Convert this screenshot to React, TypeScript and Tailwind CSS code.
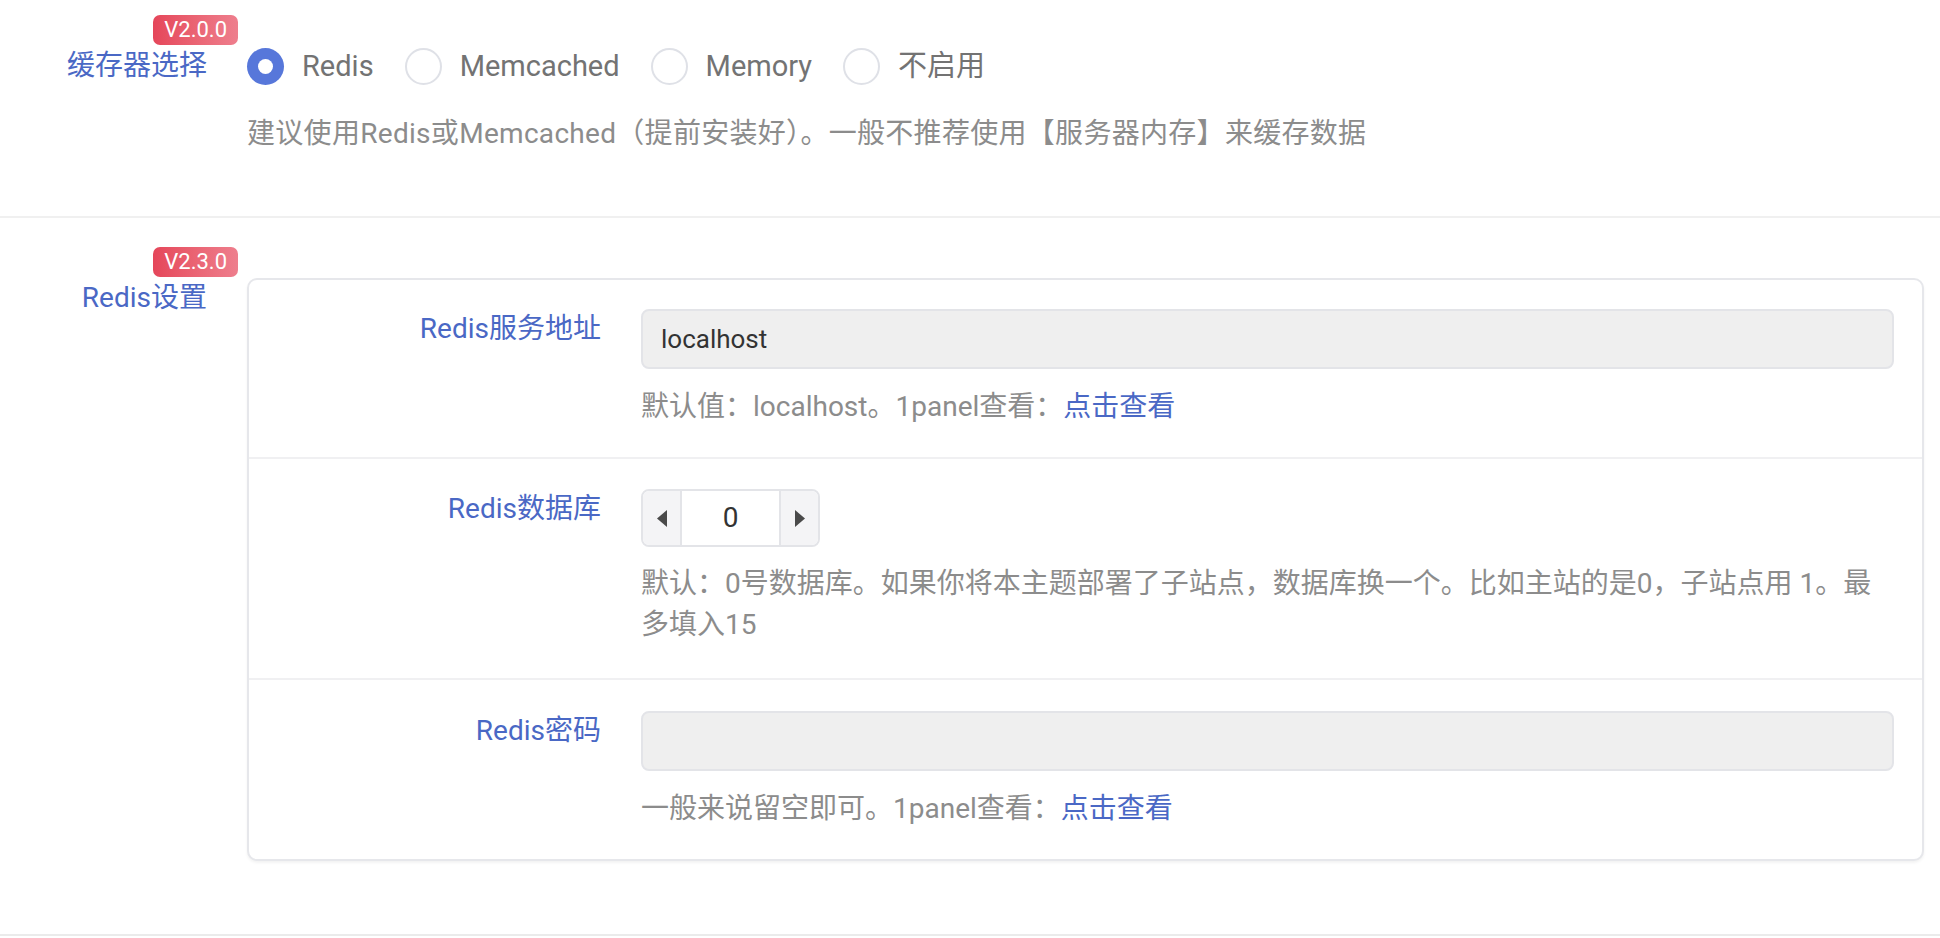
import { useState } from 'react';

const BLUE = 'text-[#4a68c5]';

function Badge({ children }: { children: React.ReactNode }) {
  return (
    <span className="absolute right-[-31px] top-[-31px] h-[30px] whitespace-nowrap rounded-[7px] bg-linear-to-r from-[#e5465a] to-[#ee7e8d] px-[11px] text-[22px] leading-[30px] text-white">
      {children}
    </span>
  );
}

function Radio({ label, checked, onClick }: { label: string; checked: boolean; onClick: () => void }) {
  return (
    <label className="flex cursor-pointer items-center gap-[18px]" onClick={onClick}>
      {checked ? (
        <span className="flex h-[37px] w-[37px] items-center justify-center rounded-full bg-[#5777da]">
          <span className="h-[15px] w-[15px] rounded-full bg-white" />
        </span>
      ) : (
        <span className="h-[37px] w-[37px] rounded-full border-2 border-[#dfe1e7] bg-white" />
      )}
      <span className="text-[29px] leading-[40px] text-[#737373]">{label}</span>
    </label>
  );
}

function Row({ label, top, children, last }: { label: string; top: string; children: React.ReactNode; last?: boolean }) {
  return (
    <div className={`flex items-start ${last ? '' : 'border-b-2 border-[#f0f0f2]'} ${top}`}>
      <div className={`w-[352px] shrink-0 text-right text-[28px] leading-[40px] ${BLUE}`}>{label}</div>
      <div className="ml-[40px] mr-[28px] flex-1">{children}</div>
    </div>
  );
}

export default function App() {
  const [cache, setCache] = useState('Redis');
  const [db, setDb] = useState(0);

  return (
    <div className="min-h-screen bg-white font-[Roboto,'Noto_Sans_CJK_SC',sans-serif]">
      {/* 缓存器选择 */}
      <div className="flex pt-[46px] pb-[61px]">
        <div className="w-[207px] shrink-0 text-right">
          <span className={`relative inline-block text-[28px] leading-[40px] ${BLUE}`}>
            缓存器选择
            <Badge>V2.0.0</Badge>
          </span>
        </div>
        <div className="ml-[40px]">
          <div className="flex h-[40px] items-center gap-[31px]">
            {['Redis', 'Memcached', 'Memory', '不启用'].map((c) => (
              <Radio key={c} label={c} checked={cache === c} onClick={() => setCache(c)} />
            ))}
          </div>
          <p className="mt-[27px] text-[28px] leading-[42px] tracking-[0.3px] text-[#8c8c8c]">
            建议使用Redis或Memcached（提前安装好）。一般不推荐使用【服务器内存】来缓存数据
          </p>
        </div>
      </div>

      <div className="h-[2px] bg-[#f0f0f0]" />

      {/* Redis设置 */}
      <div className="flex items-start pt-[60px] pb-[73px]">
        <div className="w-[207px] shrink-0 text-right">
          <span className={`relative inline-block text-[28px] leading-[40px] ${BLUE}`}>
            Redis设置
            <Badge>V2.3.0</Badge>
          </span>
        </div>
        <div className="ml-[40px] mr-[16px] flex-1 rounded-[10px] border-2 border-[#e6e7eb] bg-white shadow-[0_2px_3px_rgba(0,0,0,0.05)]">
          <Row label="Redis服务地址" top="pt-[29px] pb-[30px]">
            <input
              defaultValue="localhost"
              className="h-[60px] w-full rounded-[8px] border-2 border-[#e3e4e8] bg-[#efefef] px-[18px] text-[26px] text-[#333] outline-none"
            />
            <p className="mt-[17px] text-[28px] leading-[41px] text-[#8c8c8c]">
              默认值：localhost。1panel查看：<a className={BLUE}>点击查看</a>
            </p>
          </Row>
          <Row label="Redis数据库" top="pt-[30px] pb-[33px]">
            <div className="flex h-[58px] w-[179px] overflow-hidden rounded-[8px] border-2 border-[#e3e4e8]">
              <button
                className="flex w-[39px] items-center justify-center border-r-2 border-[#e3e4e8] bg-[#f4f4f6]"
                onClick={() => setDb(Math.max(0, db - 1))}
              >
                <svg width="10" height="17" viewBox="0 0 10 17">
                  <polygon points="10,0 10,17 0,8.5" fill="#4a4a4a" />
                </svg>
              </button>
              <div className="flex flex-1 items-center justify-center bg-white text-[28px] text-[#333]">{db}</div>
              <button
                className="flex w-[39px] items-center justify-center border-l-2 border-[#e3e4e8] bg-[#f4f4f6]"
                onClick={() => setDb(Math.min(15, db + 1))}
              >
                <svg width="10" height="17" viewBox="0 0 10 17">
                  <polygon points="0,0 0,17 10,8.5" fill="#4a4a4a" />
                </svg>
              </button>
            </div>
            <p className="mt-[16px] text-[28px] leading-[41px] text-[#8c8c8c]">
              默认：0号数据库。如果你将本主题部署了子站点，数据库换一个。比如主站的是0，子站点用 1。最多填入15
            </p>
          </Row>
          <Row label="Redis密码" top="pt-[31px] pb-[30px]" last>
            <input
              type="password"
              className="h-[60px] w-full rounded-[8px] border-2 border-[#e3e4e8] bg-[#efefef] px-[18px] text-[26px] text-[#333] outline-none"
            />
            <p className="mt-[17px] text-[28px] leading-[41px] text-[#8c8c8c]">
              一般来说留空即可。1panel查看：<a className={BLUE}>点击查看</a>
            </p>
          </Row>
        </div>
      </div>

      <div className="h-[2px] bg-[#ebebeb]" />
    </div>
  );
}
